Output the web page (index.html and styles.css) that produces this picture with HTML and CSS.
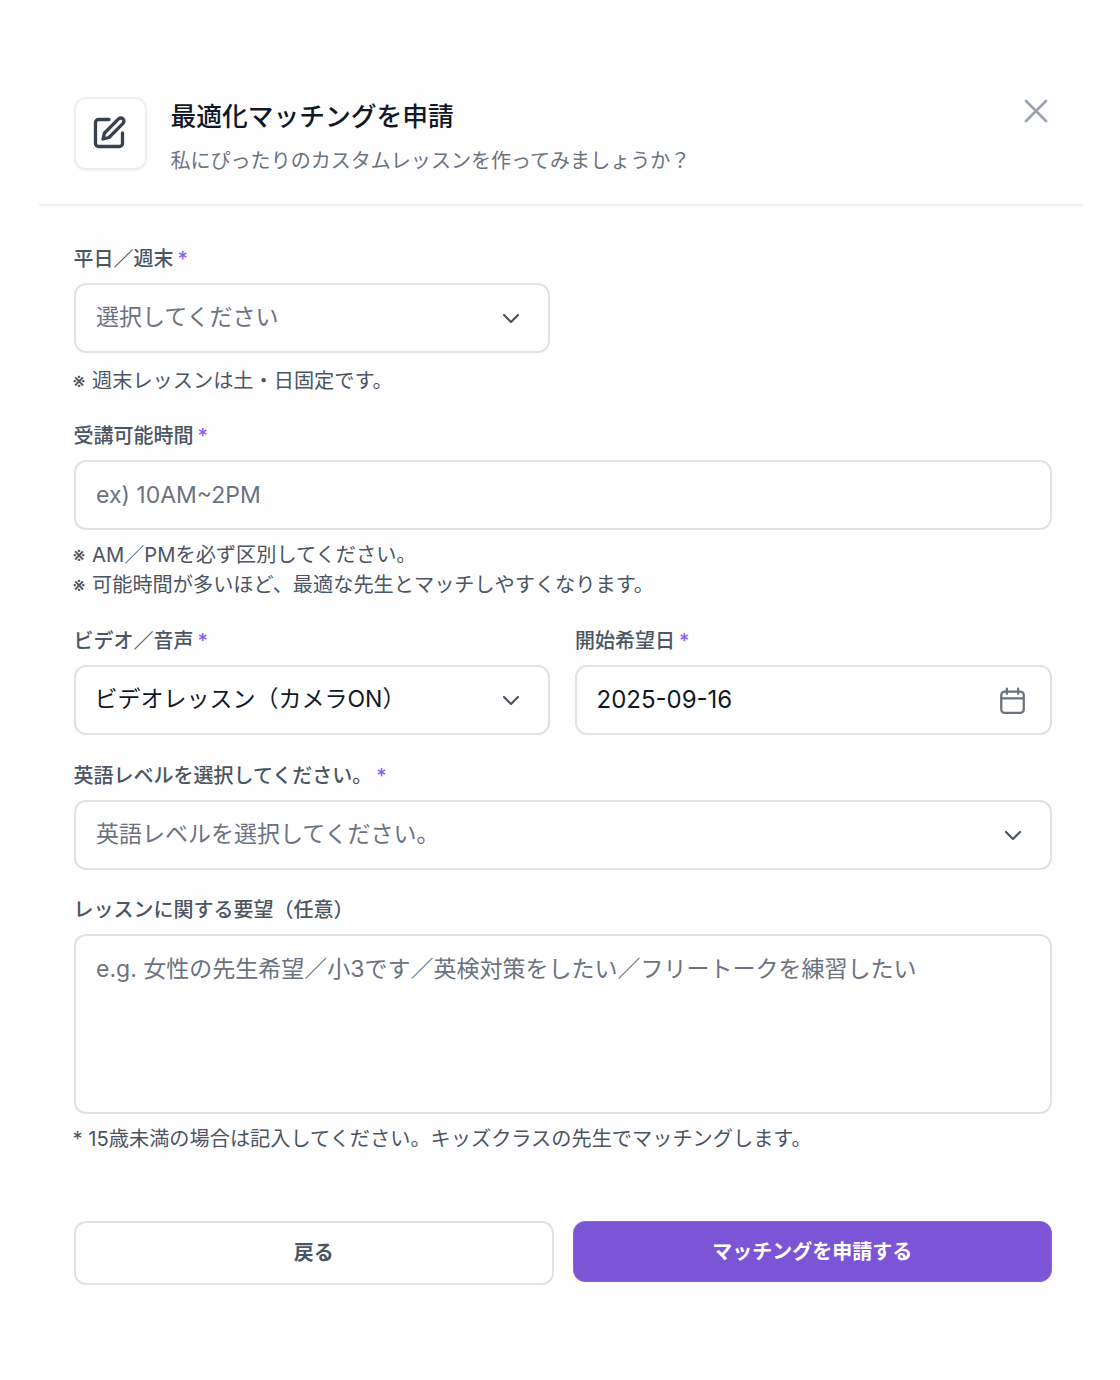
FILE: index.html
```html
<!DOCTYPE html>
<html lang="ja">
<head>
<meta charset="utf-8">
<title>最適化マッチングを申請</title>
<link rel="stylesheet" href="styles.css">
</head>
<body>
<main class="modal">
  <header class="modal-header">
    <div class="icon-box">
      <svg class="edit-icon" viewBox="0 0 24 24" fill="none" stroke="currentColor" stroke-width="2.2" stroke-linecap="round" stroke-linejoin="round"><path d="M12 3H5a2 2 0 0 0-2 2v14a2 2 0 0 0 2 2h14a2 2 0 0 0 2-2v-7"/><path d="M18.375 2.625a2.121 2.121 0 1 1 3 3L12 15l-4 1 1-4Z"/></svg>
    </div>
    <div class="titles">
      <h1 class="title">最適化マッチングを申請</h1>
      <p class="subtitle">私にぴったりのカスタムレッスンを作ってみましょうか？</p>
    </div>
    <svg class="close-icon" viewBox="0 0 24 24" fill="none" stroke="currentColor" stroke-width="2.8" stroke-linecap="round"><path d="M2 2l20 20M22 2L2 22"/></svg>
  </header>
  <form class="form">
    <div class="field half">
      <div class="label">平日／週末<span class="req">*</span></div>
      <div class="control placeholder"><span class="jp">選択してください</span><svg class="chevron" viewBox="0 0 24 24" fill="none" stroke="currentColor" stroke-width="2.2" stroke-linecap="round" stroke-linejoin="round"><path d="M5 9l7 7 7-7"/></svg></div>
      <p class="hint hint-wide"><span class="mark">※</span>週末レッスンは土・日固定です。</p>
    </div>
    <div class="field">
      <div class="label">受講可能時間<span class="req">*</span></div>
      <div class="control placeholder"><span>ex) 10AM~2PM</span></div>
      <p class="hint hint-tight"><span class="mark">※</span>AM／PMを必ず区別してください。</p>
      <p class="hint"><span class="mark">※</span>可能時間が多いほど、最適な先生とマッチしやすくなります。</p>
    </div>
    <div class="row">
      <div class="field">
        <div class="label">ビデオ／音声<span class="req">*</span></div>
        <div class="control"><span class="jp value">ビデオレッスン（カメラON）</span><svg class="chevron" viewBox="0 0 24 24" fill="none" stroke="currentColor" stroke-width="2.2" stroke-linecap="round" stroke-linejoin="round"><path d="M5 9l7 7 7-7"/></svg></div>
      </div>
      <div class="field">
        <div class="label">開始希望日<span class="req">*</span></div>
        <div class="control"><span class="date">2025-09-16</span><svg class="calendar" viewBox="0 0 24 24" fill="none" stroke="currentColor" stroke-width="2" stroke-linecap="round" stroke-linejoin="round"><rect x="2" y="4" width="20" height="19" rx="3"/><path d="M2 10h20M7 1.5V6M17 1.5V6"/></svg></div>
      </div>
    </div>
    <div class="field level">
      <div class="label">英語レベルを選択してください。<span class="req">*</span></div>
      <div class="control placeholder"><span class="jp">英語レベルを選択してください。</span><svg class="chevron" viewBox="0 0 24 24" fill="none" stroke="currentColor" stroke-width="2.2" stroke-linecap="round" stroke-linejoin="round"><path d="M5 9l7 7 7-7"/></svg></div>
    </div>
    <div class="field request">
      <div class="label">レッスンに関する要望（任意）</div>
      <div class="control area placeholder"><span>e.g. 女性の先生希望／小3です／英検対策をしたい／フリートークを練習したい</span></div>
      <p class="hint hint-note">* 15歳未満の場合は記入してください。キッズクラスの先生でマッチングします。</p>
    </div>
    <div class="actions">
      <button type="button" class="btn back">戻る</button>
      <button type="button" class="btn submit">マッチングを申請する</button>
    </div>
  </form>
</main>
</body>
</html>
```
FILE: styles.css
```css
* { box-sizing: border-box; }
html, body { margin: 0; padding: 0; }
body {
  background: #fefefe;
  font-family: Inter, "Noto Sans CJK JP", sans-serif;
  color: #111827;
  height: 1380px;
  padding: 62px 37px 0 39px;
}
.modal { width: 1044px; }
.modal-header {
  position: relative;
  display: flex;
  gap: 24px;
  height: 144px;
  padding: 35px 35px 0 34.5px;
  border-bottom: 2px solid #eeeff1;
}
.icon-box {
  width: 73px;
  height: 73px;
  flex: none;
  display: flex;
  align-items: center;
  justify-content: center;
  padding: 0 3px 2px 0;
  background: #fff;
  border: 2px solid #eeeff1;
  border-radius: 12px;
  box-shadow: 0 1px 2px rgba(16, 24, 40, .05);
  color: #374151;
}
.edit-icon { width: 36px; height: 36px; }
.titles { min-width: 0; }
.title {
  margin: 0;
  font-size: 25.75px;
  line-height: 40px;
  font-weight: 500;
  color: #111827;
}
.subtitle {
  margin: 4px 0 0;
  font-size: 20.05px;
  line-height: 40px;
  color: #6b7280;
}
.close-icon {
  position: absolute;
  right: 35.5px;
  top: 37px;
  width: 24px;
  height: 24px;
  color: #9ca3af;
}
.form {
  display: flex;
  flex-direction: column;
  padding: 0 31.5px 0 34.5px;
}
.field { display: flex; flex-direction: column; min-width: 0; }
.half { width: 476.5px; margin-top: 37px; }
.field + .field { margin-top: 24px; }
.row { display: grid; grid-template-columns: 1fr 1fr; gap: 25px; margin-top: 25px; }
.field.level { margin-top: 25px; }
.row .field + .field { margin-top: 0; }
.label {
  font-size: 20px;
  line-height: 30px;
  font-weight: 500;
  color: #4b5563;
  padding-top: 1px;
  margin-bottom: 9px;
}
.req { color: #8b5cf6; margin-left: 4px; }
.control {
  height: 70px;
  display: flex;
  align-items: center;
  justify-content: space-between;
  padding: 0 25px 0 20.5px;
  background: #fff;
  border: 2px solid #e1e2e6;
  border-radius: 12px;
  font-size: 23px;
  color: #111827;
}
.placeholder { color: #6b7280; }
.jp { margin-bottom: 6px; }
.value { margin-left: -1.5px; }
.date { font-size: 24px; margin-left: -1px; margin-bottom: 1px; }
.area {
  height: 180px;
  align-items: flex-start;
  padding-top: 14px;
}
.chevron { width: 24px; height: 24px; color: #4b5563; flex: none; }
.calendar { width: 27px; height: 27px; color: #6b7280; flex: none; margin-right: -1px; }
.hint {
  margin: 0;
  font-size: 20.2px;
  line-height: 30px;
  color: #4b5563;
}
.hint-wide { margin-top: 13px; }
.hint-tight { margin-top: 10px; }
.hint-note { margin-top: 10px; margin-left: -1px; }
.mark {
  display: inline-block;
  width: 19.5px;
  margin-left: -1px;
  line-height: 1;
}
.actions {
  display: flex;
  gap: 19px;
  align-items: flex-start;
  margin-top: 67px;
}
.btn {
  flex: 1;
  font: 600 20px/30px Inter, "Noto Sans CJK JP", sans-serif;
  border-radius: 12px;
  padding: 0;
}
.back {
  height: 64px;
  background: #fff;
  border: 2px solid #e1e2e6;
  color: #4b5563;
}
.submit {
  height: 61px;
  background: #7c55d6;
  border: 1px solid #8a66dc;
  color: #fff;
}
```
